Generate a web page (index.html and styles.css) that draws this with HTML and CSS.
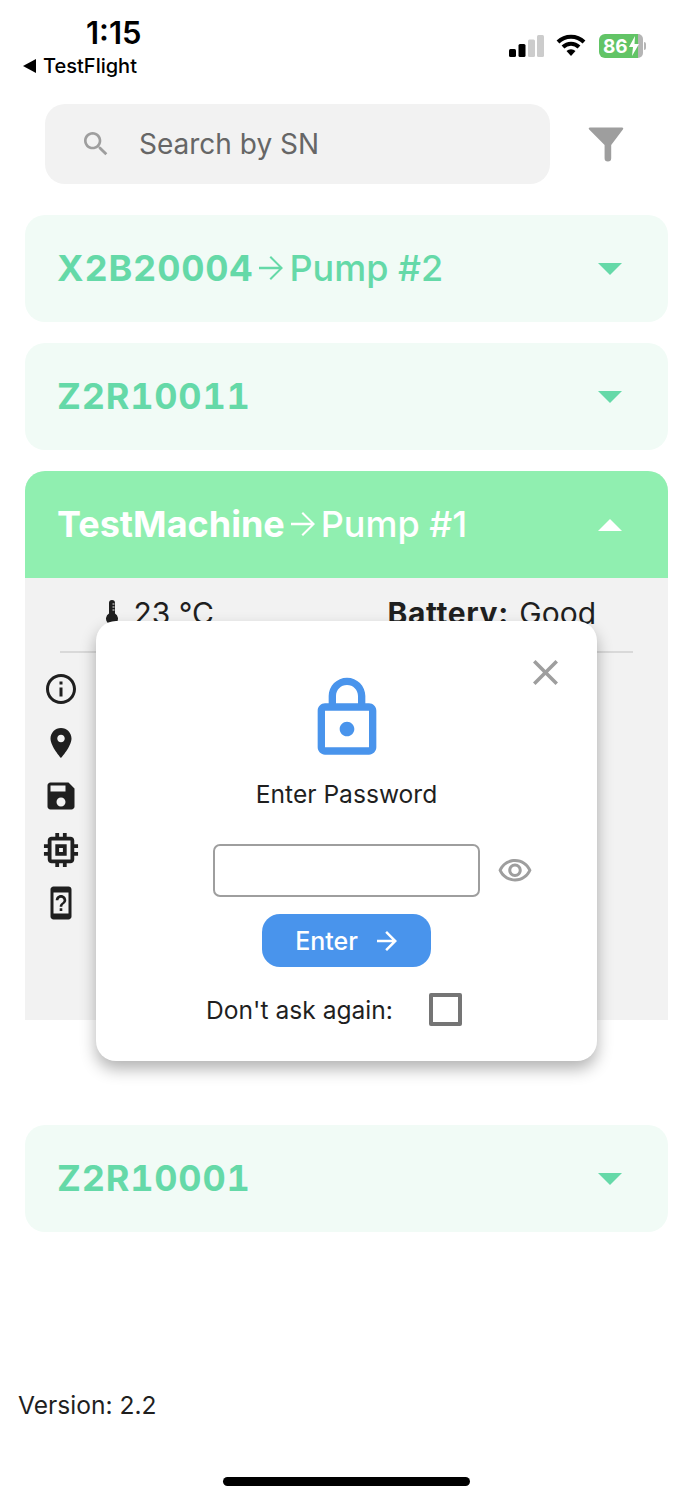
FILE: index.html
```html
<!DOCTYPE html>
<html lang="en">
  <head>
    <meta charset="UTF-8" />
    <meta name="viewport" content="width=device-width, initial-scale=1.0" />
    <title>Pumps</title>
    <link rel="stylesheet" href="styles.css">
  </head>
  <body>
    <div class="screen">
      <div class="status-bar">
        <div class="status-left">
          <div class="status-time">1:15</div>
          <div class="status-back"><span class="back-arrow"></span>TestFlight</div>
        </div>
        <div class="status-right">
          <svg class="signal" viewBox="0 0 35 22">
            <rect x="0" y="14" width="7" height="8" rx="1.5" fill="#000" />
            <rect x="9.500" y="9" width="7" height="13" rx="1.5" fill="#000" />
            <rect x="19" y="4.500" width="7" height="17.500" rx="1.5" fill="#ccc" />
            <rect x="28" y="0" width="7" height="22" rx="1.5" fill="#ccc" />
          </svg>
          <svg class="wifi" viewBox="0 0 30 24">
            <path d="M2 9a18.500 18.500 0 0 1 26 0" fill="none" stroke="#000" stroke-width="4" />
            <path d="M7 14a11.500 11.500 0 0 1 16 0" fill="none" stroke="#000" stroke-width="4" />
            <path d="M15 23l-4.500-5a6.500 6.500 0 0 1 9 0z" fill="#000" />
          </svg>
          <div class="battery">
            <div class="battery-level">86<svg class="bolt" viewBox="0 0 10 20"><path d="M6 0L0 11h4l-1 9 7-12H5.500z" fill="#fff" /></svg></div>
            <div class="battery-rest"></div>
            <div class="battery-cap"></div>
          </div>
        </div>
      </div>

      <div class="search-row">
        <div class="search-box">
          <svg class="search-icon" viewBox="0 0 24 24"><path d="M15.5 14h-.79l-.28-.27C15.41 12.59 16 11.11 16 9.500 16 5.910 13.090 3 9.500 3S3 5.910 3 9.500 5.910 16 9.500 16c1.610 0 3.090-.59 4.230-1.570l.27.28v.79l5 4.990L20.490 19l-4.990-5zm-6 0C7.010 14 5 11.990 5 9.500S7.010 5 9.500 5 14 7.010 14 9.500 11.990 14 9.500 14z" /></svg>
          <span class="search-text">Search by SN</span>
        </div>
        <svg class="filter-icon" viewBox="0 0 38 38"><path d="M2 1.500h34c1 0 1.500 1 1 2L24.500 20v14a3.500 3.500 0 0 1-7 0V20L1 3.500c-.5-1 0-2 1-2z" /></svg>
      </div>

      <div class="machine">
        <div class="machine-head">
          <span class="serial serial-code">X2B20004</span>
          <svg class="link-arrow" viewBox="0 0 24 24"><path d="M12 4l-1 1L17.300 11.200H4v1.600h13.300l-6.300 6.200 1 1 8-8z" /></svg>
          <span class="pump">Pump #2</span>
          <span class="caret"></span>
        </div>
      </div>

      <div class="machine">
        <div class="machine-head">
          <span class="serial serial-code">Z2R10011</span>
          <span class="caret"></span>
        </div>
      </div>

      <div class="machine open">
        <div class="machine-head">
          <span class="serial">TestMachine</span>
          <svg class="link-arrow" viewBox="0 0 24 24"><path d="M12 4l-1 1L17.300 11.200H4v1.600h13.300l-6.300 6.200 1 1 8-8z" /></svg>
          <span class="pump">Pump #1</span>
          <span class="caret"></span>
        </div>
        <div class="machine-body">
          <div class="stats">
            <div class="stat stat-temp">
              <svg class="thermo" viewBox="0 0 16 24"><path d="M5 3a3 3 0 0 1 6 0v10.500a6 6 0 1 1-6 0z" /><path d="M8.500 4h2M8.500 7h2M8.500 10h2" stroke="#f2f2f2" stroke-width="1" /></svg>
              <span>23 °C</span>
            </div>
            <div class="stat stat-battery"><b>Battery:</b> Good</div>
          </div>
          <div class="divider"></div>
          <div class="side-icons">
            <svg viewBox="0 0 24 24"><path d="M11 7h2v2h-2zm0 4h2v6h-2zm1-9C6.480 2 2 6.480 2 12s4.480 10 10 10 10-4.480 10-10S17.520 2 12 2zm0 18c-4.410 0-8-3.590-8-8s3.590-8 8-8 8 3.590 8 8-3.590 8-8 8z" /></svg>
            <svg viewBox="0 0 24 24"><path d="M12 2C8.130 2 5 5.130 5 9c0 5.250 7 13 7 13s7-7.750 7-13c0-3.870-3.130-7-7-7zm0 9.500c-1.380 0-2.500-1.120-2.500-2.500s1.120-2.500 2.500-2.500 2.500 1.120 2.500 2.500-1.120 2.500-2.500 2.500z" /></svg>
            <svg viewBox="0 0 24 24"><path d="M17 3H5c-1.110 0-2 .9-2 2v14c0 1.100.89 2 2 2h14c1.100 0 2-.9 2-2V7l-4-4zm-5 16c-1.660 0-3-1.340-3-3s1.340-3 3-3 3 1.340 3 3-1.340 3-3 3zm3-10H5V5h10v4z" /></svg>
            <svg viewBox="2.500 2.500 19 19"><path d="M15 9H9v6h6V9zm-2 4h-2v-2h2v2zm8-2V9h-2V7c0-1.100-.9-2-2-2h-2V3h-2v2h-2V3H9v2H7c-1.100 0-2 .9-2 2v2H3v2h2v2H3v2h2v2c0 1.100.9 2 2 2h2v2h2v-2h2v2h2v-2h2c1.100 0 2-.9 2-2v-2h2v-2h-2v-2h2zm-4 6H7V7h10v10z" /></svg>
            <svg viewBox="0 0 24 24"><path d="M17 1.010L7 1c-1.100 0-2 .9-2 2v18c0 1.100.9 2 2 2h10c1.100 0 2-.9 2-2V3c0-1.100-.9-1.990-2-1.990zM17 19H7V5h10v14zM12 6.720c-1.960 0-3.500 1.520-3.500 3.470h1.750c0-.93.82-1.750 1.750-1.750s1.750.82 1.750 1.750c0 1.750-2.620 1.680-2.620 4.350h1.750c0-1.960 2.620-2.190 2.620-4.350 0-1.950-1.540-3.470-3.500-3.470zm-.88 8.800h1.750v1.750h-1.750z" /></svg>
          </div>
        </div>
      </div>

      <div class="machine machine-last">
        <div class="machine-head">
          <span class="serial serial-code">Z2R10001</span>
          <span class="caret"></span>
        </div>
      </div>

      <div class="version">Version: 2.2</div>
      <div class="home-bar"></div>

      <div class="modal">
        <svg class="modal-close" viewBox="5 5 14 14"><path d="M19 6.410L17.590 5 12 10.590 6.410 5 5 6.410 10.590 12 5 17.590 6.410 19 12 13.410 17.590 19 19 17.590 13.410 12z" /></svg>
        <svg class="lock-icon" viewBox="0 0 24 24"><path d="M18 8h-1V6c0-2.760-2.240-5-5-5S7 3.240 7 6v2H6c-1.100 0-2 .9-2 2v10c0 1.100.9 2 2 2h12c1.100 0 2-.9 2-2V10c0-1.100-.9-2-2-2zM9 6c0-1.660 1.340-3 3-3s3 1.340 3 3v2H9V6zm9 14H6V10h12v10zm-6-3c1.100 0 2-.9 2-2s-.9-2-2-2-2 .9-2 2 .9 2 2 2z" /></svg>
        <div class="modal-title">Enter Password</div>
        <div class="password-row">
          <div class="password-input"></div>
          <svg class="eye-icon" viewBox="0 0 24 24"><path d="M12 6c3.790 0 7.170 2.130 8.820 5.500C19.170 14.870 15.790 17 12 17s-7.170-2.130-8.820-5.500C4.830 8.130 8.210 6 12 6m0-2C7 4 2.730 7.110 1 11.500 2.730 15.890 7 19 12 19s9.270-3.110 11-7.500C21.270 7.110 17 4 12 4zm0 5c1.380 0 2.500 1.120 2.500 2.500S13.380 14 12 14s-2.500-1.120-2.500-2.500S10.620 9 12 9m0-2c-2.480 0-4.500 2.020-4.500 4.500S9.520 16 12 16s4.500-2.020 4.500-4.500S14.480 7 12 7z" /></svg>
        </div>
        <div class="enter-button">
          <span>Enter</span>
          <svg viewBox="0 0 24 24"><path d="M12 4l-1.410 1.410L16.170 11H4v2h12.170l-5.580 5.590L12 20l8-8z" /></svg>
        </div>
        <div class="ask-row">
          <span>Don't ask again:</span>
          <div class="checkbox"></div>
        </div>
      </div>
    </div>
  </body>
</html>
```

FILE: styles.css
```css
:root {
  --green: #65d9a8;
  --green-light: #f1fbf6;
  --green-open: #90efb0;
  --grey-bg: #f2f2f2;
  --blue: #4994ec;
  --text-color: #1f1f1f;
  --icon-grey: #9e9e9e;
}

* {
  box-sizing: border-box;
}

body {
  margin: 0;
  background: #fff;
  font-family: "Inter", "Liberation Sans", sans-serif;
  color: var(--text-color);
}

.screen {
  position: relative;
  height: 1500px;
  overflow: hidden;
}

/* status bar */
.status-bar {
  height: 104px;
  display: flex;
  justify-content: space-between;
  padding: 15px 47px 0 23px;
}

.status-left {
  display: flex;
  flex-direction: column;
  color: #000;
}

.status-time {
  font-size: 31px;
  line-height: 35px;
  font-weight: 600;
  margin-left: 63px;
}

.status-back {
  display: flex;
  align-items: center;
  font-size: 20px;
  line-height: 32px;
  font-weight: 500;
}

.back-arrow {
  width: 0;
  height: 0;
  border-top: 7px solid transparent;
  border-bottom: 7px solid transparent;
  border-right: 13px solid #000;
  margin-right: 7px;
}

.status-right {
  display: flex;
  align-items: center;
  height: 62px;
}

.signal {
  width: 35px;
  height: 22px;
  margin-right: -1px;
}

.wifi {
  width: 30px;
  height: 24px;
  margin-left: 13px;
  margin-bottom: 3px;
}

.battery {
  display: flex;
  align-items: center;
  height: 24px;
  margin-left: 13px;
}

.battery-level {
  position: relative;
  z-index: 1;
  width: 39px;
  height: 24px;
  padding-left: 4px;
  display: flex;
  align-items: center;
  background: #62c466;
  border-radius: 6px 0 0 6px;
  color: #fff;
  font-size: 19px;
  font-weight: 700;
}

.bolt {
  width: 10px;
  height: 20px;
  margin-left: 1px;
  flex-shrink: 0;
}

.battery-rest {
  width: 5px;
  height: 24px;
  background: #b5b5b5;
  border-radius: 0 6px 6px 0;
}

.battery-cap {
  width: 2px;
  height: 8px;
  margin-left: 1px;
  background: #b5b5b5;
  border-radius: 0 2px 2px 0;
}

/* search */
.search-row {
  display: flex;
  align-items: center;
  margin: 0 0 31px 45px;
}

.search-box {
  width: 505px;
  height: 80px;
  display: flex;
  align-items: center;
  padding-left: 35px;
  background: var(--grey-bg);
  border-radius: 20px;
}

.search-icon {
  width: 32px;
  height: 32px;
  fill: var(--icon-grey);
}

.search-text {
  margin-left: 27px;
  font-size: 28px;
  color: #666;
}

.filter-icon {
  width: 36px;
  height: 36px;
  margin-left: 38px;
  fill: var(--icon-grey);
}

/* machine cards */
.machine {
  margin: 0 25px 21px;
  background: var(--green-light);
  border-radius: 20px;
  color: var(--green);
}

.machine-head {
  height: 107px;
  display: flex;
  align-items: center;
  padding: 0 46px 2px 32px;
  font-size: 36px;
}

.serial {
  font-weight: 700;
}

.serial-code {
  font-variant-numeric: tabular-nums;
  letter-spacing: .8px;
}

.link-arrow {
  width: 36px;
  height: 36px;
  fill: currentColor;
  flex-shrink: 0;
}

.pump {
  font-weight: 500;
}

.caret {
  width: 0;
  height: 0;
  margin: 2px 0 0 auto;
  border-left: 12px solid transparent;
  border-right: 12px solid transparent;
  border-top: 12px solid currentColor;
}

.machine.open {
  background: var(--grey-bg);
  border-radius: 20px 20px 0 0;
  color: var(--text-color);
  margin-bottom: 105px;
}

.machine.open .machine-head {
  background: var(--green-open);
  border-radius: 20px 20px 0 0;
  color: #fff;
}

.machine.open .caret {
  border-top: 0;
  border-bottom: 12px solid currentColor;
}

.machine-body {
  height: 442px;
  padding: 16px 35px 0;
}

.stats {
  display: grid;
  grid-template-columns: 1fr 1fr;
  height: 57px;
  font-size: 30px;
  line-height: 38px;
}

.stat {
  display: flex;
  justify-content: center;
  white-space: pre;
}

.stat b {
  font-weight: 700;
  letter-spacing: .6px;
  margin-right: 2px;
}

.stat-temp {
  padding-right: 88px;
}

.stat-temp span {
  margin-left: 13px;
}

.stat-battery {
  padding-left: 4px;
}

.thermo {
  width: 16px;
  height: 24px;
  margin-top: 6px;
  fill: var(--text-color);
}

.divider {
  height: 2px;
  background: #d9d9d9;
}

.side-icons {
  width: 36px;
  margin: 18px 0 0 -17px;
  display: flex;
  flex-direction: column;
  gap: 17.5px;
}

.side-icons svg {
  width: 36px;
  height: 36px;
  fill: var(--text-color);
}

.version {
  margin: 158px 0 0 18px;
  font-size: 24.6px;
  line-height: 30px;
}

.home-bar {
  width: 247px;
  height: 9px;
  margin: 57px auto 0;
  background: #000;
  border-radius: 5px;
}

/* password modal */
.modal {
  position: absolute;
  top: 621px;
  left: 96px;
  width: 501px;
  height: 440px;
  display: flex;
  flex-direction: column;
  align-items: center;
  padding-top: 53px;
  background: #fff;
  border-radius: 20px;
  box-shadow: 0 8px 16px rgba(0, 0, 0, 0.3);
}

.modal-close {
  position: absolute;
  top: 39px;
  right: 39px;
  width: 25px;
  height: 25px;
  fill: var(--icon-grey);
}

.lock-icon {
  width: 88px;
  height: 88px;
  fill: var(--blue);
}

.modal-title {
  margin-top: 17px;
  font-size: 24.6px;
  line-height: 30px;
}

.password-row {
  position: relative;
  margin-top: 35px;
}

.password-input {
  width: 267px;
  height: 53px;
  border: 2px solid var(--icon-grey);
  border-radius: 7px;
}

.eye-icon {
  position: absolute;
  top: 9px;
  right: -53px;
  width: 36px;
  height: 36px;
  fill: var(--icon-grey);
}

.enter-button {
  width: 169px;
  height: 53px;
  margin-top: 17px;
  padding-left: 4px;
  display: flex;
  align-items: center;
  justify-content: center;
  gap: 14px;
  background: var(--blue);
  border-radius: 18px;
  color: #fff;
  font-size: 25px;
  font-weight: 500;
}

.enter-button svg {
  width: 30px;
  height: 30px;
  fill: #fff;
}

.ask-row {
  margin-top: 26px;
  padding-right: 25px;
  display: flex;
  align-items: center;
  gap: 36px;
  font-size: 24.6px;
}

.checkbox {
  width: 33px;
  height: 33px;
  border: 4px solid #757575;
  border-radius: 2px;
}
```
